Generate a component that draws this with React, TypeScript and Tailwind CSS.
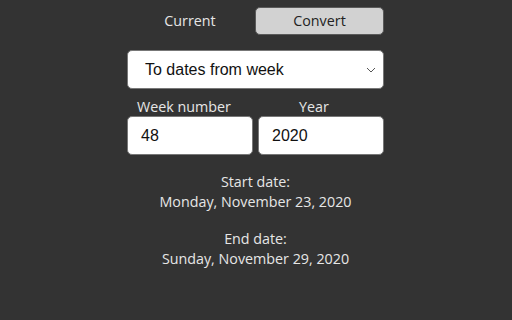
import React from "react";

export default function App() {
  const seg = { fontFamily: '"Open Sans", "Noto Sans", sans-serif' };
  const ari = { fontFamily: '"Liberation Sans", Arial, sans-serif' };
  return (
    <div className="w-[512px] h-[320px] bg-[#333333] flex pl-[127px]" style={seg}>
      <div className="w-[257px] pt-[7px] flex flex-col">
        <div className="flex gap-[2px] h-[28px]">
          <div className="flex-1 flex items-center justify-center text-[14.3px] text-[#e6e6e6]">Current</div>
          <div className="w-[129px] flex items-center justify-center rounded-[5px] bg-[#d2d2d2] border border-[#5a5a5a] text-[14.3px] text-[#222]">Convert</div>
        </div>
        <div className="mt-[15px] h-[39px] bg-white rounded-[5px] border border-[#777] flex items-center pl-[17px] pr-[7px]" style={ari}>
          <span className="flex-1 text-[16px] text-[#111]">To dates from week</span>
          <svg width="10" height="6" viewBox="0 0 10 6"><path d="M1 1 L5 5 L9 1" fill="none" stroke="#555" strokeWidth="1" /></svg>
        </div>
        <div className="mt-[8px] flex gap-[5px]">
          <div className="flex-1 min-w-0 flex flex-col">
            <div className="text-[14.3px] leading-[19px] text-[#e6e6e6] pl-[10px]">Week number</div>
            <div className="h-[39px] bg-white rounded-[5px] border border-[#777] flex items-center pl-[13px] text-[16px] text-[#111]" style={ari}>48</div>
          </div>
          <div className="flex-1 min-w-0 flex flex-col">
            <div className="text-[14.3px] leading-[19px] text-[#e6e6e6] text-center pr-[14px]">Year</div>
            <div className="h-[39px] bg-white rounded-[5px] border border-[#777] flex items-center pl-[13px] text-[16px] text-[#111]" style={ari}>2020</div>
          </div>
        </div>
        <div className="mt-[17px] flex flex-col items-center text-[14.3px] leading-[20px] text-[#e6e6e6]">
          <div>Start date:</div>
          <div>Monday, November 23, 2020</div>
          <div className="mt-[17px]">End date:</div>
          <div>Sunday, November 29, 2020</div>
        </div>
      </div>
    </div>
  );
}
